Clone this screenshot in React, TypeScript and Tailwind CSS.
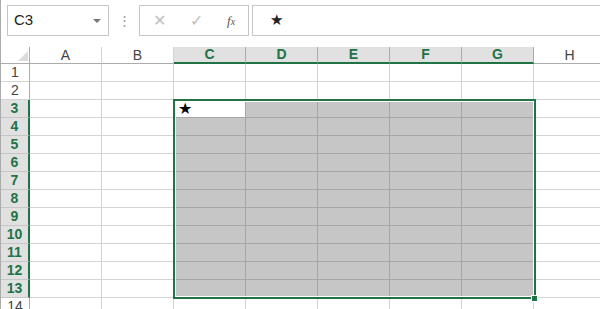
import React from "react";

const cols = ["A", "B", "C", "D", "E", "F", "G", "H"];
const rows = Array.from({ length: 14 }, (_, i) => i + 1);

const isSelCol = (c: number) => c >= 2 && c <= 6;
const isSelRow = (r: number) => r >= 3 && r <= 13;

function FormulaBar() {
  return (
    <div className="flex items-stretch h-[31px] mt-[5px] pl-[6px]">
      <div className="relative w-[102px] border border-[#c6c6c6] flex items-center pl-[6px] text-[15px] text-[#222]">
        C3
        <span className="absolute right-[7px] top-[13px] w-0 h-0 border-l-[4px] border-r-[4px] border-t-[4px] border-l-transparent border-r-transparent border-t-[#777]" />
      </div>
      <div className="w-[30px] flex items-center justify-center text-[#999] text-[13px]">⋮</div>
      <div className="w-[110px] border border-[#c6c6c6] flex items-center text-[#c0c0c0]">
        <span className="w-[38px] text-center text-[16px] ml-[1px]">✕</span>
        <span className="w-[36px] text-center text-[16px]">✓</span>
        <span className="w-[34px] text-center text-[#555] italic text-[13px] [font-family:'Liberation_Serif',serif]">
          f<span className="text-[10px]">x</span>
        </span>
      </div>
      <div className="flex-1 ml-[3px] border border-[#c6c6c6] border-r-0 flex items-center pl-[17px] text-[15px] text-[#222]">
        ★
      </div>
    </div>
  );
}

function Corner() {
  return (
    <div className="h-[17px] border-r border-b border-[#ababab] bg-white relative">
      <svg width="29" height="17" className="absolute left-0 top-0">
        <polygon points="17,14 27,14 27,4" fill="#dcdcdc" />
      </svg>
    </div>
  );
}

export default function App() {
  return (
    <div className="w-[600px] h-[309px] overflow-hidden bg-white border-l border-[#ababab] [font-family:'Liberation_Sans',Arial,sans-serif]">
      <FormulaBar />
      <div className="relative mt-[11px]">
        <div className="grid grid-cols-[29px_repeat(8,72px)]">
          <Corner />
          {cols.map((c, ci) =>
            isSelCol(ci) ? (
              <div
                key={c}
                className="h-[17px] bg-[#e1e1e1] border-r border-[#ababab] border-b-2 border-b-[#217346] flex items-center justify-center text-[14px] font-bold text-[#217346]"
              >
                {c}
              </div>
            ) : (
              <div
                key={c}
                className="h-[17px] bg-white border-r border-[#d4d4d4] border-b border-b-[#ababab] flex items-center justify-center text-[14px] text-[#444]"
              >
                {c}
              </div>
            )
          )}
          {rows.map((r) => (
            <React.Fragment key={r}>
              {isSelRow(r) ? (
                <div className="h-[18px] bg-[#e1e1e1] border-b border-[#c6c6c6] border-r-2 border-r-[#217346] flex items-center justify-center text-[14px] font-bold text-[#217346]">
                  {r}
                </div>
              ) : (
                <div className="h-[18px] bg-white border-b border-[#d4d4d4] border-r border-r-[#ababab] flex items-center justify-center text-[14px] text-[#444]">
                  {r}
                </div>
              )}
              {cols.map((c, ci) => {
                const sel = isSelRow(r) && isSelCol(ci);
                const active = r === 3 && ci === 2;
                if (active)
                  return (
                    <div key={c} className="h-[18px] bg-white border-r border-b border-[#a6a6a6] flex items-center pl-[4px] text-[16px] leading-none text-black">
                      ★
                    </div>
                  );
                return (
                  <div
                    key={c}
                    className={
                      sel
                        ? "h-[18px] bg-[#c6c6c6] border-r border-b border-[#a6a6a6]"
                        : "h-[18px] bg-white border-r border-b border-[#d4d4d4]"
                    }
                  />
                );
              })}
            </React.Fragment>
          ))}
        </div>
        {/* selection outline */}
        <div className="absolute left-[172px] top-[52px] w-[363px] h-[200px] border-2 border-[#217346] shadow-[inset_0_0_0_1px_#ffffff] pointer-events-none" />
        <div className="absolute left-[530px] top-[248px] w-[7px] h-[7px] bg-[#217346] border border-white" />
      </div>
    </div>
  );
}
